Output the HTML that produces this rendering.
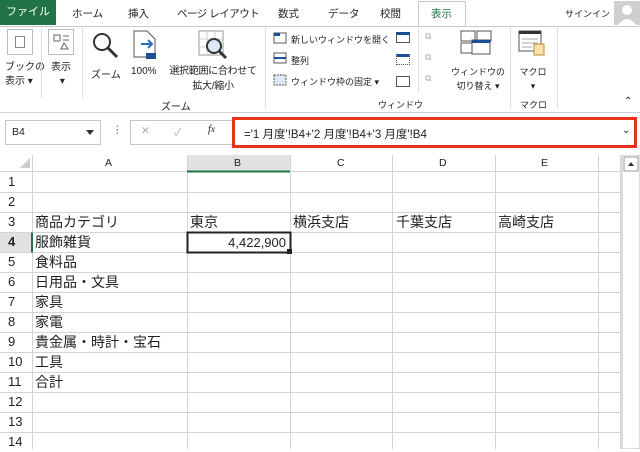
<!DOCTYPE html>
<html><head><meta charset="utf-8"><style>
*{margin:0;padding:0;box-sizing:border-box}
body{width:640px;height:449px;overflow:hidden;background:#fff;font-family:"Liberation Sans","Noto Sans CJK JP",sans-serif;color:#222;position:relative}
.a{position:absolute;white-space:nowrap}
.t{font-size:10.5px}
.s{font-size:10px}
.r{font-size:9px}
.ico{position:absolute;border:1px solid #bbb;background:#fff}
</style></head><body>
<div class="a" style="left:0;top:0;width:56px;height:25px;background:#217346;color:#fff;font-size:11px;line-height:25px;text-align:center">ファイル</div>
<div class="a t" style="left:72px;top:6px">ホーム</div>
<div class="a t" style="left:128px;top:6px">挿入</div>
<div class="a t" style="left:177px;top:6px;letter-spacing:-0.5px">ページ レイアウト</div>
<div class="a t" style="left:278px;top:6px">数式</div>
<div class="a t" style="left:328px;top:6px">データ</div>
<div class="a t" style="left:380px;top:6px">校閲</div>
<div class="a" style="left:418px;top:1px;width:48px;height:26px;border:1px solid #c8c8c8;border-bottom:none;background:#fff"></div>
<div class="a t" style="left:431px;top:6px;color:#217346">表示</div>
<div class="a r" style="left:565px;top:7px">サインイン</div>
<div class="a" style="left:614px;top:1px;width:26px;height:24px;background:#cfcfcf"></div>
<svg class="a" style="left:614px;top:1px" width="26" height="24"><circle cx="13" cy="9" r="5" fill="#fff"/><path d="M4 24 Q13 12 22 24Z" fill="#fff"/></svg>
<div class="a" style="left:0;top:26px;width:640px;height:87px;border-top:1px solid #c8c8c8;border-bottom:1px solid #d0d0d0;background:#fff"></div>
<div class="ico" style="left:7px;top:29px;width:26px;height:26px"></div>
<div class="a" style="left:15px;top:36px;width:10px;height:12px;border:1px solid #888"></div>
<div class="a s" style="left:5px;top:61px;line-height:14px">ブックの<br>表示 ▾</div>
<div class="a" style="left:41px;top:28px;height:70px;border-left:1px solid #ddd"></div>
<div class="ico" style="left:48px;top:29px;width:26px;height:26px"></div>
<svg class="a" style="left:52px;top:33px" width="20" height="18"><rect x="2" y="2" width="6" height="6" fill="none" stroke="#666"/><path d="M11 3 H17 M11 7 H17" stroke="#666"/><path d="M9 16 L12 10 L16 16Z" fill="none" stroke="#666"/></svg>
<div class="a s" style="left:51px;top:61px;line-height:14px;text-align:center">表示<br>&nbsp;▾</div>
<div class="a" style="left:82px;top:28px;height:70px;border-left:1px solid #ddd"></div>
<svg class="a" style="left:90px;top:30px" width="30" height="30"><circle cx="12" cy="12" r="8" fill="none" stroke="#333" stroke-width="2"/><path d="M18 18 L27 27" stroke="#333" stroke-width="3"/></svg>
<div class="a s" style="left:91px;top:66px">ズーム</div>
<svg class="a" style="left:133px;top:30px" width="26" height="30"><path d="M1 1 H14 L22 9 V27 H1Z" fill="#fff" stroke="#555"/><path d="M8 14 H19 M15 10 L19 14 L15 18" stroke="#2b6cb8" stroke-width="2" fill="none"/><rect x="13" y="23" width="10" height="6" fill="#1f4e99"/></svg>
<div class="a s" style="left:131px;top:66px">100%</div>
<svg class="a" style="left:198px;top:30px" width="32" height="30"><rect x="1" y="1" width="24" height="24" fill="#fff" stroke="#999"/><path d="M1 9 H25 M1 17 H25 M9 1 V25 M17 1 V25" stroke="#ccc"/><circle cx="16" cy="16" r="7" fill="#dde8f4" stroke="#333" stroke-width="2"/><path d="M21 21 L28 28" stroke="#333" stroke-width="3"/></svg>
<div class="a s" style="left:166px;top:64px;line-height:15px;width:94px;text-align:center;letter-spacing:-0.3px">選択範囲に合わせて<br>拡大/縮小</div>
<div class="a s" style="left:161px;top:98px">ズーム</div>
<div class="a" style="left:265px;top:28px;height:80px;border-left:1px solid #ddd"></div>
<svg class="a" style="left:273px;top:32px" width="16" height="60"><rect x="1" y="1" width="12" height="10" fill="#fff" stroke="#555"/><rect x="1" y="1" width="6" height="3" fill="#1f4e99"/><rect x="1" y="21" width="12" height="10" fill="#fff" stroke="#555"/><path d="M1 26 H13" stroke="#1f4e99" stroke-width="2"/><rect x="1" y="43" width="12" height="10" fill="#dde8f4" stroke="#555" stroke-dasharray="2 1"/></svg>
<div class="a r" style="left:291px;top:33px">新しいウィンドウを開く</div>
<div class="a r" style="left:291px;top:54px">整列</div>
<div class="a r" style="left:291px;top:75px">ウィンドウ枠の固定 ▾</div>
<div class="a" style="left:396px;top:32px;width:14px;height:11px;border:1px solid #555;border-top:3px solid #1f4e99"></div>
<div class="a" style="left:396px;top:54px;width:14px;height:11px;border:1px dotted #555;border-top:3px solid #1f4e99"></div>
<div class="a" style="left:396px;top:76px;width:14px;height:11px;border:1px solid #555"></div>
<div class="a" style="left:418px;top:28px;height:65px;border-left:1px solid #ddd"></div>
<div class="a r" style="left:425px;top:31px;color:#aaa">⧉</div>
<div class="a r" style="left:425px;top:52px;color:#aaa">⧉</div>
<div class="a r" style="left:425px;top:73px;color:#aaa">⧉</div>
<svg class="a" style="left:460px;top:30px" width="32" height="28"><rect x="1" y="1" width="14" height="10" fill="#fff" stroke="#555"/><rect x="17" y="1" width="14" height="10" fill="#fff" stroke="#555"/><rect x="1" y="13" width="14" height="10" fill="#fff" stroke="#555"/><rect x="12" y="10" width="18" height="14" fill="#fff" stroke="#555"/><rect x="12" y="10" width="18" height="3" fill="#1f4e99"/></svg>
<div class="a r" style="left:450px;top:65px;line-height:14px;width:56px;text-align:center">ウィンドウの<br>切り替え ▾</div>
<div class="a r" style="left:378px;top:98px">ウィンドウ</div>
<div class="a" style="left:510px;top:28px;height:80px;border-left:1px solid #ddd"></div>
<svg class="a" style="left:518px;top:30px" width="30" height="28"><rect x="1" y="1" width="22" height="20" fill="#fff" stroke="#555"/><rect x="1" y="1" width="22" height="3" fill="#333"/><path d="M4 9 H20 M4 13 H20 M4 17 H14" stroke="#aaa"/><rect x="16" y="14" width="10" height="11" fill="#f7e3b0" stroke="#c08a2a"/></svg>
<div class="a r" style="left:518px;top:65px;line-height:14px;width:30px;text-align:center">マクロ<br>▾</div>
<div class="a r" style="left:520px;top:98px">マクロ</div>
<div class="a" style="left:557px;top:28px;height:80px;border-left:1px solid #ddd"></div>
<div class="a s" style="left:624px;top:96px">⌃</div>
<div class="a" style="left:5px;top:120px;width:96px;height:25px;border:1px solid #c6c6c6"></div>
<div class="a t" style="left:12px;top:126px">B4</div>
<div class="a" style="left:86px;top:130px;border:4px solid transparent;border-top:5px solid #333"></div>
<div class="a t" style="left:112px;top:124px;color:#777">⋮</div>
<div class="a" style="left:130px;top:120px;width:104px;height:25px;border:1px solid #c6c6c6"></div>
<div class="a t" style="left:141px;top:125px;color:#aaa">✕</div>
<div class="a t" style="left:174px;top:125px;color:#aaa">✓</div>
<div class="a t" style="left:208px;top:124px;font-style:italic;font-family:'Liberation Serif',serif">f<span style="font-size:9px">x</span></div>
<div class="a" style="left:232px;top:117px;width:405px;height:31px;border:3px solid #e8321c;background:#fff"></div>
<div class="a" style="left:244px;top:126px;font-size:11.5px">='1 月度'!B4+'2 月度'!B4+'3 月度'!B4</div>
<div class="a s" style="left:622px;top:125px">⌄</div>
<svg class="a" style="left:0;top:155px" width="640" height="294">
<rect x="187" y="0" width="103" height="17" fill="#e1e1e1"/>
<path d="M20 3 L30 3 L30 13Z" fill="#ccc" transform="rotate(90 25 8)"/>
<g stroke="#d4d4d4" stroke-width="1">
<path d="M0 16.5 H620"/>
<path d="M32.5 0 V294 M187.5 0 V294 M290.5 0 V294 M392.5 0 V294 M495.5 0 V294 M598.5 0 V294 M620.5 0 V294"/>
<path d="M0 37.5 H620 M0 57.5 H620 M0 77.5 H620 M0 97.5 H620 M0 117.5 H620 M0 137.5 H620 M0 157.5 H620 M0 177.5 H620 M0 197.5 H620 M0 217.5 H620 M0 237.5 H620 M0 257.5 H620 M0 277.5 H620"/>
</g>
<path d="M187 16.5 H290" stroke="#217346" stroke-width="2"/>
<rect x="0" y="78" width="32" height="19" fill="#e1e1e1"/>
<path d="M32 77.5 V97.5" stroke="#217346" stroke-width="2"/>
<rect x="187.5" y="77.5" width="103" height="20" fill="none" stroke="#222" stroke-width="2"/>
<rect x="287" y="94" width="5" height="5" fill="#222"/>
<rect x="622" y="0" width="18" height="294" fill="#fff" stroke="#bbb"/>
<rect x="624" y="2" width="14" height="14" fill="#fff" stroke="#999"/>
<path d="M628 11 L631 7 L634 11Z" fill="#333"/>
</svg>
<div class="a t" style="left:105px;top:157px">A</div>
<div class="a t" style="left:234px;top:157px">B</div>
<div class="a t" style="left:337px;top:157px">C</div>
<div class="a t" style="left:439px;top:157px">D</div>
<div class="a t" style="left:541px;top:157px">E</div>
<div class="a" style="left:0;top:172px;width:32px;font-size:13px;line-height:20px;padding-left:8px">
1<br>2<br>3<br><b>4</b><br>5<br>6<br>7<br>8<br>9<br>10<br>11<br>12<br>13<br>14</div>
<div class="a" style="left:35px;top:212px;font-size:14px;line-height:20px">商品カテゴリ<br>服飾雑貨<br>食料品<br>日用品・文具<br>家具<br>家電<br>貴金属・時計・宝石<br>工具<br>合計</div>
<div class="a" style="left:190px;top:212px;font-size:14px;line-height:20px">東京</div>
<div class="a" style="left:293px;top:212px;font-size:14px;line-height:20px">横浜支店</div>
<div class="a" style="left:396px;top:212px;font-size:14px;line-height:20px">千葉支店</div>
<div class="a" style="left:498px;top:212px;font-size:14px;line-height:20px">高崎支店</div>
<div class="a" style="left:190px;top:233px;width:96px;text-align:right;font-size:13px;line-height:20px">4,422,900</div>
</body></html>
